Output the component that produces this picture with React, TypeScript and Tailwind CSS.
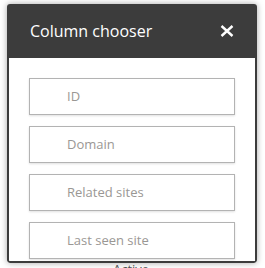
const columns = ['ID', 'Domain', 'Related sites', 'Last seen site'];

export default function App() {
    return (
        <div className="relative w-[265px] h-[268px] bg-white overflow-hidden" style={{ fontFamily: '"Open Sans", sans-serif' }}>
            {/* grid text behind the dialog */}
            <div className="absolute left-[113px] top-[260px] text-[13px] leading-[18px] text-[#555]">Active</div>

            {/* Dialog */}
            <div className="absolute left-[7px] top-[4px] w-[250px] h-[259px] flex flex-col rounded-[3px] overflow-hidden bg-white shadow-[0_0_6px_rgba(0,0,0,0.35)]">
                <div className="h-[54px] shrink-0 flex items-center justify-between bg-[#3c3c3c] pl-[23px] pr-[23px]">
                    <span className="text-[16px] text-white">Column chooser</span>
                    <svg width="14" height="12" viewBox="0 0 14 12" className="text-white">
                        <path d="M1.5 1 L12.5 11 M12.5 1 L1.5 11" stroke="currentColor" strokeWidth="2.4" fill="none" />
                    </svg>
                </div>
                <div className="flex-1 min-h-0 overflow-hidden border-x-2 border-b-2 border-[#3c3c3c] rounded-b-[3px] px-[20px] pt-[20px] flex flex-col gap-[11px]">
                    {columns.map((c) => (
                        <div
                            key={c}
                            className="h-[37px] shrink-0 flex items-center pl-[37px] border border-[#b3b3b3] bg-white shadow-[0_1px_2px_rgba(0,0,0,0.12)] text-[13px] text-[#9a9794]"
                        >
                            {c}
                        </div>
                    ))}
                </div>
            </div>
        </div>
    );
}
